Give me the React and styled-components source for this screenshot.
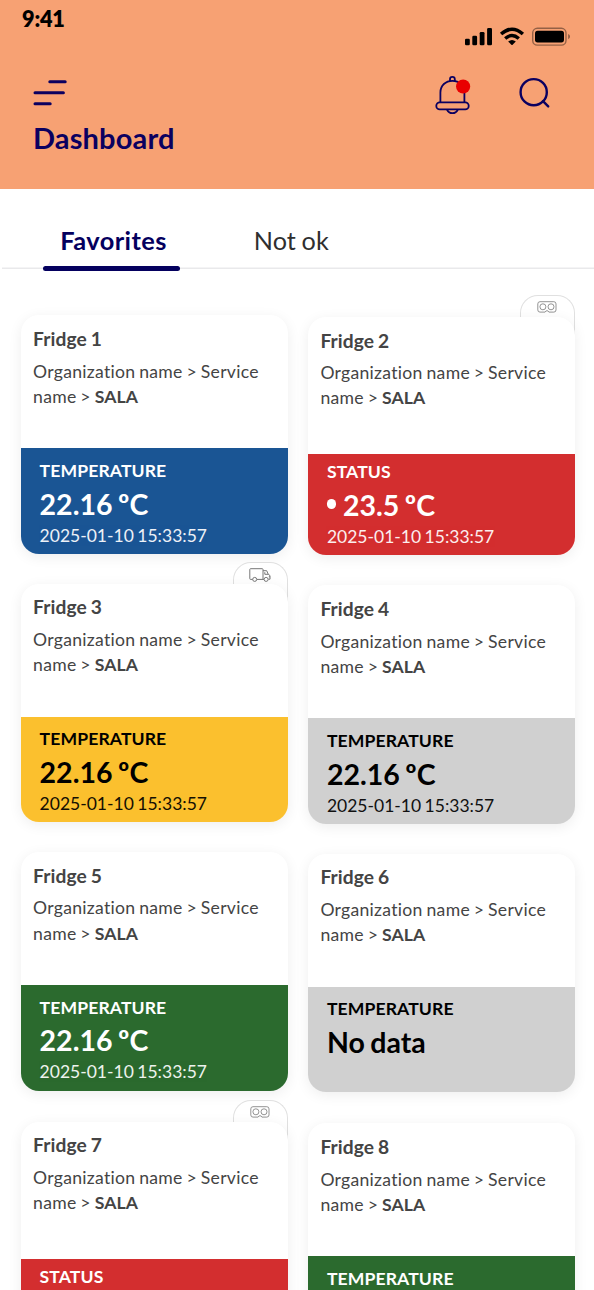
import styled, { createGlobalStyle, css } from "styled-components";

const GlobalStyle = createGlobalStyle`
  * {
    box-sizing: border-box;
  }
  body {
    margin: 0;
    background: #fff;
    font-family: Lato, "Liberation Sans", sans-serif;
    word-spacing: -0.06em;
  }
`;

const colors = {
  blue: "#1a5594",
  red: "#d32e2f",
  yellow: "#fbc02e",
  grey: "#d0d0d0",
  green: "#2b6a2e",
};

const leftFridges = [
  { name: "Fridge 1", label: "TEMPERATURE", value: "22.16 ºC", color: "blue" },
  { name: "Fridge 3", label: "TEMPERATURE", value: "22.16 ºC", color: "yellow", badge: "truck" },
  { name: "Fridge 5", label: "TEMPERATURE", value: "22.16 ºC", color: "green" },
  { name: "Fridge 7", label: "STATUS", value: "23.5 ºC", color: "red", badge: "probe", alarm: true },
];

const rightFridges = [
  { name: "Fridge 2", label: "STATUS", value: "23.5 ºC", color: "red", badge: "probe", alarm: true },
  { name: "Fridge 4", label: "TEMPERATURE", value: "22.16 ºC", color: "grey" },
  { name: "Fridge 6", label: "TEMPERATURE", value: "No data", color: "grey", noDate: true },
  { name: "Fridge 8", label: "TEMPERATURE", value: "22.16 ºC", color: "green" },
];

const PhoneStatus = () => (
  <svg width="106" height="20" viewBox="465 27 106 20">
    <rect x="465" y="38.8" width="4.8" height="6.4" rx="1.3" />
    <rect x="472.3" y="35.8" width="4.8" height="9.4" rx="1.3" />
    <rect x="479.7" y="32" width="4.8" height="13.2" rx="1.3" />
    <rect x="487.1" y="28" width="4.9" height="17.2" rx="1.3" />
    <g fill="none" stroke="#000" strokeWidth="3.4">
      <path d="M501.1 34.1 Q512 24.3 522.9 34.1" />
      <path d="M505.2 38.6 Q512 32.6 518.8 38.6" />
    </g>
    <path d="M508.2 41.6 Q512 38.3 515.8 41.6 L512.6 44.8 Q512 45.3 511.4 44.8 Z" />
    <rect x="532.7" y="28.3" width="33.3" height="16.8" rx="4.6" fill="none" stroke="#000" strokeOpacity=".4" strokeWidth="1.4" />
    <rect x="535" y="30.8" width="29" height="11.6" rx="2.6" />
    <path d="M568.2 34 Q570 34.8 570 36.6 Q570 38.4 568.2 39.3 Z" fillOpacity=".45" />
  </svg>
);

const MenuIcon = () => (
  <svg width="34" height="28" viewBox="33 79 34 28" stroke="#0b0060" strokeWidth="3" strokeLinecap="round">
    <path d="M49.8 81.7H65.2M35 92.8H63.4M35 103.8H50.2" />
  </svg>
);

const BellIcon = () => (
  <svg width="36" height="40" viewBox="435 75 36 40" fill="none" stroke="#0b0060" strokeWidth="1.8">
    <path d="M440.4 102.3V92.5C440.4 85.4 445.7 80.8 452.4 80.8S464.4 85.4 464.4 92.5V102.3" />
    <path d="M450 81V79.2A2.4 2.4 0 0 1 454.8 79.2V81" />
    <rect x="436.3" y="102.4" width="32.4" height="7" rx="3.4" />
    <path d="M447 109.6C448 112 450 113.2 452.4 113.2S456.8 112 457.8 109.6" />
    <circle cx="463.1" cy="86.5" r="7.1" fill="#e90000" stroke="none" />
  </svg>
);

const SearchIcon = () => (
  <svg width="32" height="32" viewBox="519 77 32 32" fill="none" stroke="#0b0060" strokeWidth="2.4" strokeLinecap="round">
    <circle cx="533.7" cy="92.2" r="13.1" />
    <path d="M543 101.2L548.2 106.4" />
  </svg>
);

const TruckIcon = () => (
  <svg width="22" height="14" viewBox="0 0 22 14" fill="none" stroke="#777" strokeWidth="1">
    <path d="M3.6 11.4H1.5Q.8 11.4.8 10.6V1.4Q.8.7 1.5.7H13.2Q14 .7 14 1.4V11.4H8M14 2.7H17.7L19.2 6.2 21 7.6V11.2H19.4M14.9 11.4H14M15.8 4.2V6.3H19.2M21 8.8H19.8" />
    <circle cx="5.7" cy="11.4" r="2" />
    <circle cx="17.1" cy="11.4" r="2" />
  </svg>
);

const ProbeIcon = () => (
  <svg width="20" height="12" viewBox="0 0 20 12" fill="none" stroke="#888" strokeWidth=".9">
    <path d="M3 .7H16.8Q19 .7 19 2.9V8.9Q19 11.1 16.8 11.1H11.9Q11.3 9.7 10 9.7T8.1 11.1H3Q.8 11.1.8 8.9V2.9Q.8 .7 3 .7Z" />
    <circle cx="5.9" cy="5.8" r="3" />
    <circle cx="14" cy="5.8" r="3" />
  </svg>
);

const FridgeCard = ({ fridge }) => (
  <CardWrap>
    {fridge.badge && (
      <Badge>{fridge.badge === "truck" ? <TruckIcon /> : <ProbeIcon />}</Badge>
    )}
    <Card>
      <Info>
        <Name>{fridge.name}</Name>
        <Place>
          Organization name &gt; Service name &gt; <b>SALA</b>
        </Place>
      </Info>
      <Reading $color={fridge.color} $alarm={fridge.alarm}>
        <Label>{fridge.label}</Label>
        <Value>
          {fridge.alarm && <Dot />}
          {fridge.value}
        </Value>
        {!fridge.noDate && <Time>2025-01-10 15:33:57</Time>}
      </Reading>
    </Card>
  </CardWrap>
);

export default function App() {
  return (
    <Screen>
      <GlobalStyle />
      <Header>
        <StatusBar>
          <Clock>9:41</Clock>
          <PhoneStatus />
        </StatusBar>
        <Toolbar>
          <MenuIcon />
          <Actions>
            <BellIcon />
            <SearchIcon />
          </Actions>
        </Toolbar>
        <Title>Dashboard</Title>
      </Header>
      <Tabs>
        <Tab $active>Favorites</Tab>
        <Tab>Not ok</Tab>
      </Tabs>
      <Board>
        <Column>
          {leftFridges.map((f) => (
            <FridgeCard key={f.name} fridge={f} />
          ))}
        </Column>
        <Column $lower>
          {rightFridges.map((f) => (
            <FridgeCard key={f.name} fridge={f} />
          ))}
        </Column>
      </Board>
    </Screen>
  );
}

const Screen = styled.div`
  width: 594px;
  height: 1290px;
  overflow: hidden;
  background: #fff;
`;

const Header = styled.header`
  height: 188.5px;
  background: #f7a173;
`;

const StatusBar = styled.div`
  height: 75px;
  padding: 7px 23px 0 22px;
  display: flex;
  justify-content: space-between;

  svg {
    margin-top: 20px;
  }
`;

const Clock = styled.div`
  font-size: 21.7px;
  line-height: 24px;
  font-weight: 800;
  letter-spacing: -0.2px;
  color: #000;
`;

const Toolbar = styled.div`
  height: 40px;
  padding: 0 43px 0 33px;
  display: flex;
  justify-content: space-between;

  > svg {
    margin-top: 4px;
  }
`;

const Actions = styled.div`
  display: flex;
  gap: 48px;

  svg:last-child {
    margin-top: 2px;
  }
`;

const Title = styled.h1`
  margin: 5px 0 0 33px;
  font-size: 29px;
  line-height: 36px;
  font-weight: 700;
  letter-spacing: 0.15px;
  color: #0b0060;
`;

const Tabs = styled.nav`
  display: flex;
  height: 80.5px;
  margin-left: 2px;
  padding: 31.5px 0 0 41px;
  gap: 42px;
  box-shadow: inset 0 -1.5px 0 #e9e9eb;
`;

const Tab = styled.div`
  width: 137px;
  height: 50px;
  padding-left: 1.5px;
  text-align: center;
  font-size: 25.2px;
  line-height: 40px;
  letter-spacing: 0.1px;
  color: #2f2f2f;

  ${({ $active }) =>
    $active &&
    css`
      padding-left: 4px;
      font-size: 25.4px;
      font-weight: 700;
      letter-spacing: 0.4px;
      color: #04005e;

      &::after {
        content: "";
        display: block;
        width: 137px;
        height: 4.8px;
        margin: 6px 0 0 -4px;
        border-radius: 3px;
        background: #04005e;
      }
    `}
`;

const Board = styled.main`
  display: flex;
  gap: 20.3px;
  padding: 46.4px 0 0 20.6px;
`;

const Column = styled.div`
  display: flex;
  flex-direction: column;
  gap: 30px;
  width: 267px;
  margin-top: ${({ $lower }) => ($lower ? "1.7px" : 0)};
`;

const CardWrap = styled.div`
  position: relative;

  &:last-child {
    margin-top: 1px;
  }
`;

const Badge = styled.div`
  position: absolute;
  top: -22px;
  right: 0;
  display: flex;
  justify-content: center;
  width: 55px;
  height: 40px;
  padding-top: 5px;
  border: 1.4px solid #e0e0e0;
  border-bottom: 0;
  border-radius: 18px 18px 0 0;
  background: #fff;
`;

const Card = styled.article`
  position: relative;
  display: flex;
  flex-direction: column;
  height: 238.4px;
  border-radius: 18px;
  background: #fff;
  box-shadow: 0 3px 14px rgba(0, 0, 0, 0.07);
  overflow: hidden;
`;

const Info = styled.div`
  flex: 1;
  padding: 10.5px 10px 0 12.5px;
  color: #444;
`;

const Name = styled.div`
  font-size: 19.2px;
  line-height: 25px;
  font-weight: 700;
  letter-spacing: 0.1px;
`;

const Place = styled.div`
  margin-top: 7.8px;
  font-size: 17.6px;
  line-height: 25.1px;
  letter-spacing: 0.28px;

  b {
    letter-spacing: 0.1px;
  }
`;

const Reading = styled.div`
  height: ${({ $alarm }) => ($alarm ? "101px" : "105.5px")};
  padding: ${({ $alarm }) => ($alarm ? "6px" : "10.6px")} 0 0 19px;
  background: ${({ $color }) => colors[$color]};
  color: ${({ $color }) =>
    $color === "yellow" || $color === "grey" ? "#000" : "#fff"};
`;

const Label = styled.div`
  font-size: 17.6px;
  line-height: 24px;
  font-weight: 700;
  letter-spacing: 0.1px;
`;

const Value = styled.div`
  display: flex;
  align-items: center;
  font-size: 28.5px;
  line-height: 36px;
  margin-top: 2.7px;
  font-weight: 700;
  word-spacing: -0.05em;
`;

const Dot = styled.span`
  width: 9.5px;
  height: 9.5px;
  margin: 0 6.5px 2px 0;
  border-radius: 50%;
  background: #fff;
`;

const Time = styled.div`
  font-size: 17.5px;
  line-height: 24px;
  margin-top: 2.1px;
  opacity: 0.92;
`;
